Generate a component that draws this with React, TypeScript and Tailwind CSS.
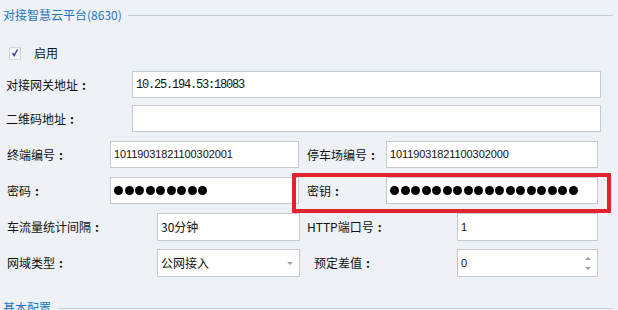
import React from 'react';

const FONT = { fontFamily: '"Noto Sans CJK SC", "Noto Sans", sans-serif' };

function Dots({ count }: { count: number }) {
  return (
    <div className="flex items-center gap-[1.5px]">
      {Array.from({ length: count }).map((_, i) => (
        <span key={i} className="w-[9px] h-[9px] rounded-full bg-black inline-block" />
      ))}
    </div>
  );
}

function Box({ className = '', children }: { className?: string; children?: React.ReactNode }) {
  return (
    <div className={`h-full bg-white border border-[#c5cad0] flex items-center pl-[3px] relative ${className}`}>
      {children}
    </div>
  );
}

function Label({ className = '', children }: { className?: string; children: React.ReactNode }) {
  return (
    <div className={`shrink-0 flex items-center text-[12px] text-[#111] leading-none ${className}`}>
      <span>{children}</span>
      <span className="ml-[4px] font-bold">:</span>
    </div>
  );
}

const num = 'font-["Liberation_Sans"] text-[11px] text-[#111] tracking-[-0.1px]';

export default function App() {
  return (
    <div className="w-[618px] h-[310px] overflow-hidden bg-[#eef1f5] relative" style={FONT}>
      {/* legend */}
      <div className="flex items-center h-[30px] pl-[3px] pr-[5px]">
        <span className="text-[12px] text-[#2477bd] leading-none">对接智慧云平台(8630)</span>
        <div className="flex-1 h-px bg-[#c6ccd2] ml-[6px]" />
      </div>

      {/* enable */}
      <div className="flex items-center h-[18px] mt-[14px] pl-[9px]">
        <div className="w-[12px] h-[13px] border border-[#d3d7dc] bg-[#f7f8fa] flex items-center justify-center">
          <svg width="10" height="10" viewBox="0 0 10 10">
            <polyline points="2.5,5 4.2,7.5 7.5,1.5" fill="none" stroke="#3a4596" strokeWidth="1.5" />
          </svg>
        </div>
        <span className="ml-[13px] text-[12px] text-[#111] leading-none">启用</span>
      </div>

      {/* gateway */}
      <div className="flex items-center h-[27px] mt-[9px] pl-[6px]">
        <Label className="w-[126px]">对接网关地址</Label>
        <Box className="w-[469px]">
          <span className='font-["Liberation_Mono"] text-[12px] tracking-[-1.2px] text-[#111]'>10.25.194.53:18083</span>
        </Box>
      </div>

      {/* qr */}
      <div className="flex items-center h-[27px] mt-[7px] pl-[6px]">
        <Label className="w-[126px]">二维码地址</Label>
        <Box className="w-[469px]" />
      </div>

      {/* terminal / parking */}
      <div className="flex items-center h-[27px] mt-[9px] pl-[7px]">
        <Label className="w-[103px]">终端编号</Label>
        <Box className="w-[189px]">
          <span className={num}>10119031821100302001</span>
        </Box>
        <Label className="w-[79px] ml-[8px]">停车场编号</Label>
        <Box className="w-[212px]">
          <span className={num}>10119031821100302000</span>
        </Box>
      </div>

      {/* password / key */}
      <div className="flex items-center h-[27px] mt-[9px] pl-[7px]">
        <Label className="w-[103px]">密码</Label>
        <Box className="w-[189px]">
          <Dots count={9} />
        </Box>
        <Label className="w-[79px] ml-[8px]">密钥</Label>
        <Box className="w-[212px]">
          <Dots count={18} />
        </Box>
      </div>

      {/* interval / http */}
      <div className="flex items-center h-[28px] mt-[9px] pl-[7px]">
        <Label className="w-[150px]">车流量统计间隔</Label>
        <Box className="w-[143px]">
          <span className="text-[12px] text-[#111] leading-none">30分钟</span>
        </Box>
        <Label className="w-[150px] ml-[7px]">HTTP端口号</Label>
        <Box className="w-[141px]">
          <span className={num}>1</span>
        </Box>
      </div>

      {/* network / diff */}
      <div className="flex items-center h-[28px] mt-[8px] pl-[7px]">
        <Label className="w-[150px]">网域类型</Label>
        <Box className="w-[143px]">
          <span className="text-[12px] text-[#111] leading-none">公网接入</span>
          <span className="absolute right-[6px] top-[12px] w-0 h-0 border-l-[3px] border-r-[3px] border-t-[3px] border-l-transparent border-r-transparent border-t-[#9aa0a6]" />
        </Box>
        <Label className="w-[150px] ml-[7px] pl-[7px]">预定差值</Label>
        <Box className="w-[141px]">
          <span className={num}>0</span>
          <span className="absolute right-[6px] top-[7px] w-0 h-0 border-l-[3px] border-r-[3px] border-b-[3px] border-l-transparent border-r-transparent border-b-[#9aa0a6]" />
          <span className="absolute right-[6px] top-[17px] w-0 h-0 border-l-[3px] border-r-[3px] border-t-[3px] border-l-transparent border-r-transparent border-t-[#9aa0a6]" />
        </Box>
      </div>

      {/* next legend */}
      <div className="flex items-center h-[24px] mt-[19px] pl-[3px] pr-[5px]">
        <span className="text-[12px] text-[#2477bd] leading-none">基本配置</span>
        <div className="flex-1 h-px bg-[#c6ccd2] ml-[7px]" />
      </div>

      {/* highlight */}
      <div className="absolute left-[292px] top-[173px] w-[319px] h-[40px] border-[4px] border-[#e3232b] rounded-[1px]" />
    </div>
  );
}
